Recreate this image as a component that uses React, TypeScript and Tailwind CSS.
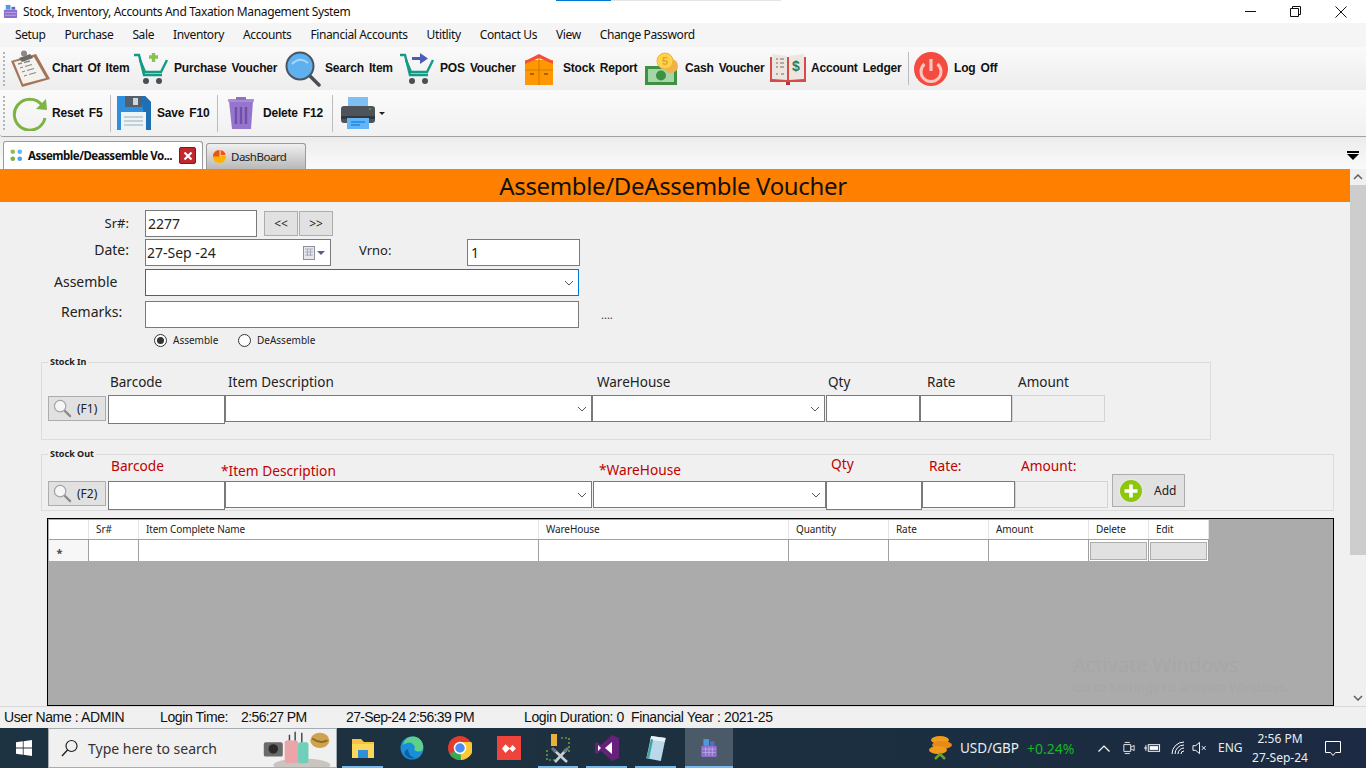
import type { ReactNode } from "react";

const ui = "font-['Noto_Sans','Open_Sans',sans-serif]";

const ClipboardIcon = () => (
  <svg viewBox="0 0 40 38" className="h-[38px] w-[40px]">
    <path d="M0 11 L25 4 L39 29 L11 37 Z" fill="#a5755a" />
    <path d="M3 12 L23 7 L35 28 L12 34 Z" fill="#f4f2ee" />
    <path d="M7 14l4-1M13 12.500l6-1.500M9 18l3-1M14 16.500l7-2M11 22l3-1M16 20.500l7-2M13 26l3-1M18 24.500l7-2" stroke="#8a8a8a" strokeWidth="1.300" />
    <path d="M8 8 L19 4 L22 8 L11 12 Z" fill="#6e6a66" />
    <circle cx="13" cy="3.500" r="3" fill="#8b8783" />
  </svg>
);

const CartIcon = ({ kind }: { kind: "plus" | "arrow" }) => (
  <svg viewBox="0 0 36 34" className="h-[34px] w-[36px]">
    <path d="M1 3 L6 3 L11 23 L29 23" fill="none" stroke="#159a85" strokeWidth="2.400" />
    <path d="M7 8 L12 20 L28 20 L34 8" fill="none" stroke="#159a85" strokeWidth="2.400" />
    <circle cx="13" cy="29" r="3" fill="#4a4f55" />
    <circle cx="26" cy="29" r="3" fill="#4a4f55" />
    {kind === "plus" ? (
      <path d="M16 5h9M20.500 1v9" stroke="#8cc152" strokeWidth="3.400" />
    ) : (
      <g fill="#4d5cb8">
        <rect x="13" y="5" width="9" height="3" />
        <path d="M21 1 L29 6.500 L21 12 Z" />
      </g>
    )}
  </svg>
);

const SearchIcon = () => (
  <svg viewBox="0 0 36 36" className="h-[36px] w-[36px]">
    <path d="M24 24 L34 34" stroke="#4a4f55" strokeWidth="3.500" strokeLinecap="round" />
    <circle cx="15" cy="15" r="13.500" fill="#5eb0ee" stroke="#4a5560" strokeWidth="2" />
    <path d="M7 13 Q15 5 23 12" fill="none" stroke="#a9d8f8" strokeWidth="2" />
  </svg>
);

const BoxIcon = () => (
  <svg viewBox="0 0 30 32" className="h-[32px] w-[30px]">
    <rect x="1" y="7" width="28" height="25" fill="#ff9800" />
    <path d="M1 8 L15 1 L29 8 L29 11 L15 5 L1 11 Z" fill="#f0503c" />
    <path d="M15 5v27M1 17h28" stroke="#d57c00" strokeWidth="1.200" />
    <path d="M6 21h4M20 21h4" stroke="#8a5200" strokeWidth="1.500" />
  </svg>
);

const CashIcon = () => (
  <svg viewBox="0 0 36 34" className="h-[34px] w-[36px]">
    <rect x="1" y="14" width="32" height="19" fill="#3f9142" />
    <rect x="4" y="17" width="26" height="13" fill="#a5d6a7" />
    <circle cx="17" cy="23.500" r="5" fill="#3f9142" />
    <circle cx="27" cy="14" r="7" fill="#f0b04a" />
    <circle cx="21" cy="9" r="8" fill="#fdd34e" stroke="#f2b136" strokeWidth="1" />
    <text x="21" y="13" textAnchor="middle" fontSize="11" fontFamily="Liberation Sans" fontWeight="700" fill="#e8a22d">5</text>
  </svg>
);

const LedgerIcon = () => (
  <svg viewBox="0 0 38 34" className="h-[34px] w-[38px]">
    <path d="M1 5 L1 30 L37 30 L37 5" fill="#d84a4a" />
    <path d="M3 2 L18 4 L18 28 L3 27 Z" fill="#ece5e0" />
    <path d="M35 2 L20 4 L20 28 L35 27 Z" fill="#ece5e0" />
    <path d="M7 7h2M11 7h4M7 11h2M11 11h4M7 15h2M11 15h4M7 22h2M12 22h3" stroke="#a0928c" strokeWidth="1.500" />
    <text x="27" y="19" textAnchor="middle" fontSize="14" fontFamily="Liberation Sans" fontWeight="700" fill="#2e7d4a">$</text>
    <rect x="17" y="30" width="4" height="3" fill="#b33" />
  </svg>
);

const PowerIcon = () => (
  <svg viewBox="0 0 34 34" className="h-[34px] w-[34px]">
    <circle cx="17" cy="17" r="17" fill="#f44b3f" />
    <path d="M10.500 12 A10 10 0 1 0 23.500 12" fill="none" stroke="#ffc4c0" strokeWidth="3" />
    <path d="M17 7v12" stroke="#ffc4c0" strokeWidth="3.200" />
  </svg>
);

const ResetIcon = () => (
  <svg viewBox="0 0 36 36" className="h-[36px] w-[36px]">
    <path d="M30 10 A15.500 15.500 0 1 0 33 23" fill="none" stroke="#7cb342" strokeWidth="3" />
    <path d="M24 14 L35 15 L34 4 Z" fill="#7cb342" />
  </svg>
);

const SaveIcon = () => (
  <svg viewBox="0 0 36 36" className="h-[36px] w-[36px]">
    <path d="M1 1 H29 L35 7 V35 H1 Z" fill="#2f8fdc" />
    <path d="M25 1 H29 L35 7 V35 H30 Z" fill="#1f6fb5" />
    <rect x="9" y="1" width="17" height="11" fill="#54616c" />
    <rect x="17" y="3" width="5" height="7" fill="#cfd8dc" />
    <rect x="5" y="17" width="25" height="18" fill="#eef3f6" />
    <path d="M8 22h19M8 26h19M8 30h19" stroke="#b7c5cd" strokeWidth="1.300" />
  </svg>
);

const TrashIcon = () => (
  <svg viewBox="0 0 28 34" className="h-[34px] w-[28px]">
    <path d="M2 5 H26 L24 33 H5 Z" fill="#9575cd" />
    <rect x="1" y="3" width="26" height="3" rx="1" fill="#a98bd8" />
    <rect x="9" y="1" width="10" height="3" fill="#8e6fc4" />
    <path d="M9 11v17M14 11v17M19 11v17" stroke="#6f4fa8" strokeWidth="2.400" />
  </svg>
);

const PrinterIcon = () => (
  <svg viewBox="0 0 36 34" className="h-[34px] w-[36px]">
    <rect x="8" y="1" width="20" height="11" fill="#7fc0f4" />
    <rect x="1" y="10" width="34" height="17" rx="3" fill="#4d5358" />
    <rect x="1" y="20" width="34" height="3" fill="#33383c" />
    <circle cx="30" cy="13" r="1" fill="#4caf50" />
    <rect x="7" y="22" width="22" height="11" fill="#64b5f6" />
    <path d="M11 26h14M11 29h9" stroke="#1e88e5" strokeWidth="1.300" />
  </svg>
);

const ToolButton = ({ icon, label, iconClass, textClass }: { icon: ReactNode; label: string; iconClass: string; textClass: string }) => (
  <div className="flex items-center">
    <div className={`flex items-center ${iconClass}`}>{icon}</div>
    <span className={`-mt-[1px] whitespace-nowrap text-[12px] font-bold tracking-[-0.2px] text-[#111] [word-spacing:2px] font-['Liberation_Sans',sans-serif] ${textClass}`}>{label}</span>
  </div>
);

const Grip = () => <div className="h-[34px] w-[3px] shrink-0 border-l-2 border-dotted border-[#b5b5b5]" />;

const MagnifierSmall = () => (
  <svg viewBox="0 0 20 20" className="h-[19px] w-[19px]">
    <path d="M11 11 L18 18" stroke="#8a8a8a" strokeWidth="2.400" strokeLinecap="round" />
    <circle cx="7.500" cy="7.500" r="6" fill="#f4f6f8" stroke="#a4a4a4" strokeWidth="1.300" />
  </svg>
);

const Chevron = () => (
  <svg viewBox="0 0 10 6" className="h-[6px] w-[10px]">
    <path d="M1 1 L5 5 L9 1" fill="none" stroke="#555" strokeWidth="1" />
  </svg>
);

const Box = ({ className, children }: { className: string; children?: ReactNode }) => (
  <div className={`flex shrink-0 items-center border border-[#7a7a7a] bg-white ${className}`}>{children}</div>
);

const Combo = ({ className }: { className: string }) => (
  <Box className={`justify-end pr-[4px] ${className}`}>
    <Chevron />
  </Box>
);

const SearchKey = ({ label }: { label: string }) => (
  <div className="flex h-[25px] w-[58px] shrink-0 items-center gap-[5px] border border-[#adadad] bg-[#e1e1e1] pl-[4px] text-[12px] text-[#222]">
    <MagnifierSmall />
    {label}
  </div>
);

const Th = ({ w, children }: { w: string; children?: ReactNode }) => (
  <div className={`flex h-full shrink-0 items-center border-r border-[#e4e4e4] pl-[7px] text-[10px] tracking-[-0.1px] text-[#222] ${w}`}>{children}</div>
);

const Td = ({ w, children }: { w: string; children?: ReactNode }) => (
  <div className={`flex h-full shrink-0 items-center justify-center border-r border-[#a0a0a0] ${w}`}>{children}</div>
);

const GridBtn = () => <div className="h-[18px] w-[57px] border border-[#adadad] bg-[#e1e1e1]" />;

const menus = ["Setup", "Purchase", "Sale", "Inventory", "Accounts", "Financial Accounts", "Utitlity", "Contact Us", "View", "Change Password"];

export default function App() {
  return (
    <div className={`relative flex h-[768px] w-[1366px] flex-col overflow-hidden bg-[#f0f0f0] ${ui}`}>
      {/* loading strip over the title bar */}
      <div className="absolute left-[556px] top-0 flex h-[1px]">
        <div className="w-[55px] bg-[#0078d7]" />
        <div className="w-[170px] bg-[#e4e4e4]" />
      </div>

      {/* title bar */}
      <div className="flex h-[23px] shrink-0 items-center bg-white">
        <svg viewBox="0 0 16 16" className="ml-[3px] h-[15px] w-[15px]">
          <rect x="1" y="6" width="14" height="9" rx="1" fill="#8d6fcb" />
          <rect x="3" y="1" width="5" height="5" fill="#4f9bd9" />
          <rect x="9" y="3" width="4" height="3" fill="#5c6bc0" />
          <path d="M2 9h12M2 12h12" stroke="#b9a6e4" strokeWidth="1" />
        </svg>
        <span className="ml-[5px] text-[12px] tracking-[-0.35px] text-[#111]">Stock, Inventory, Accounts And Taxation Management System</span>
        <div className="ml-auto mr-[19px] flex items-center gap-[34px]">
          <svg viewBox="0 0 11 11" className="h-[11px] w-[11px]"><path d="M0 5.500h11" stroke="#111" /></svg>
          <svg viewBox="0 0 11 11" className="h-[11px] w-[11px]"><path d="M.5 2.500h8v8h-8zM2.500 2.500v-2h8v8h-2" fill="none" stroke="#111" /></svg>
          <svg viewBox="0 0 12 12" className="h-[12px] w-[12px]"><path d="M.5.500l11 11M11.500.500l-11 11" stroke="#111" /></svg>
        </div>
      </div>

      {/* menu */}
      <div className="flex h-[24px] shrink-0 items-center gap-[19px] bg-[#f5f5f5] pl-[15px] text-[12px] tracking-[-0.38px] text-[#111]">
        {menus.map((m) => (
          <span key={m}>{m}</span>
        ))}
      </div>

      {/* toolbar 1 */}
      <div className="flex h-[43px] shrink-0 items-center bg-gradient-to-b from-[#fafafa] to-[#ededed] pl-[3px]">
        <Grip />
        <div className="w-[5px]" />
        <ToolButton icon={<ClipboardIcon />} label="Chart Of Item" iconClass="w-[41px]" textClass="w-[81px]" />
        <ToolButton icon={<CartIcon kind="plus" />} label="Purchase Voucher" iconClass="w-[41px]" textClass="w-[111px]" />
        <ToolButton icon={<SearchIcon />} label="Search Item" iconClass="w-[40px]" textClass="w-[74px]" />
        <ToolButton icon={<CartIcon kind="arrow" />} label="POS Voucher" iconClass="w-[41px]" textClass="w-[84px]" />
        <ToolButton icon={<BoxIcon />} label="Stock Report" iconClass="w-[39px]" textClass="w-[81px]" />
        <ToolButton icon={<CashIcon />} label="Cash Voucher" iconClass="w-[41px]" textClass="w-[84px]" />
        <ToolButton icon={<LedgerIcon />} label="Account Ledger" iconClass="w-[42px]" textClass="w-[97px]" />
        <div className="mr-[5px] h-[33px] w-px bg-[#bcbcbc]" />
        <ToolButton icon={<PowerIcon />} label="Log Off" iconClass="w-[40px]" textClass="" />
      </div>

      {/* toolbar 2 */}
      <div className="flex h-[47px] shrink-0 items-center rounded-bl-[3px] border-b border-[#a0a0a0] bg-gradient-to-b from-[#fbfbfb] to-[#f1f1f1] pl-[3px]">
        <Grip />
        <div className="w-[6px]" />
        <ToolButton icon={<ResetIcon />} label="Reset F5" iconClass="w-[40px]" textClass="w-[58px]" />
        <div className="mr-[5px] h-[37px] w-px bg-[#bcbcbc]" />
        <ToolButton icon={<SaveIcon />} label="Save F10" iconClass="w-[41px]" textClass="w-[60px]" />
        <div className="mr-[9px] h-[37px] w-px bg-[#bcbcbc]" />
        <ToolButton icon={<TrashIcon />} label="Delete F12" iconClass="w-[36px]" textClass="w-[69px]" />
        <div className="mr-[7px] h-[37px] w-px bg-[#bcbcbc]" />
        <PrinterIcon />
        <div className="ml-[3px] h-0 w-0 border-x-[3px] border-t-[3px] border-x-transparent border-t-[#222]" />
      </div>

      {/* tabs */}
      <div className="flex h-[32px] shrink-0 items-end bg-gradient-to-b from-[#ececec] to-[#fafafa] pl-[3px]">
        <div className="flex h-[28px] w-[200px] items-center rounded-t-[3px] border border-b-0 border-[#9a9a9a] bg-white pl-[6px]">
          <svg viewBox="0 0 14 14" className="h-[13px] w-[13px]">
            <circle cx="3" cy="3" r="2.500" fill="#8bc34a" />
            <circle cx="10.500" cy="3" r="2.500" fill="#64b5f6" />
            <circle cx="3" cy="10.500" r="2.500" fill="#7cb342" />
            <circle cx="10.500" cy="10.500" r="2.500" fill="#42a5f5" />
          </svg>
          <span className="ml-[5px] w-[151px] whitespace-nowrap text-[11.500px] font-bold tracking-[-0.5px] text-[#111]">Assemble/Deassemble Vo...</span>
          <div className="flex h-[17px] w-[17px] items-center justify-center rounded-[2px] border border-[#7d1a1a] bg-[#c1272d]">
            <svg viewBox="0 0 10 10" className="h-[10px] w-[10px]"><path d="M1.500 1.500l7 7M8.500 1.500l-7 7" stroke="#fff" strokeWidth="2.200" /></svg>
          </div>
        </div>
        <div className="ml-[3px] flex h-[26px] w-[100px] items-center rounded-t-[3px] border border-b-0 border-[#9a9a9a] bg-gradient-to-b from-[#f0f0f0] to-[#b9b9b9] pl-[5px] text-[11.500px] tracking-[-0.5px] text-[#222]">
          <svg viewBox="0 0 16 16" className="h-[15px] w-[15px]">
            <circle cx="8" cy="8" r="7" fill="#ffb300" />
            <path d="M8 8 L8 1 A7 7 0 0 0 1 8 Z" fill="#e8541e" />
            <path d="M8.800 7 L8.800 .800 A7 7 0 0 1 15 7 Z" fill="#f4511e" stroke="#fff" strokeWidth=".6" />
          </svg>
          <span className="ml-[4px]">DashBoard</span>
        </div>
        <div className="mb-[9px] ml-auto mr-[7px] flex flex-col items-center gap-[1px]">
          <div className="h-[2px] w-[12px] bg-black" />
          <div className="h-0 w-0 border-x-[6px] border-t-[6px] border-x-transparent border-t-black" />
        </div>
      </div>

      {/* main area */}
      <div className="relative flex min-h-0 flex-1">
        <div className="flex w-[1350px] shrink-0 flex-col overflow-hidden">
          <div className="flex h-[33px] shrink-0 items-center justify-center bg-[#ff8000] pr-[4px] pt-[1px] text-[24px] tracking-[-0.35px] text-[#111]">Assemble/DeAssemble Voucher</div>

          <div className="flex flex-col pl-[145px] pt-[8px] text-[#222]">
            <div className="flex items-start">
              <span className="-ml-[46px] mt-[4px] w-[46px] pr-[16px] text-right text-[13px]">Sr#:</span>
              <Box className="h-[27px] w-[112px] pl-[2px] text-[14px]">2277</Box>
              <div className="ml-[7px] mt-[1px] flex gap-[1px]">
                <div className="flex h-[25px] w-[34px] items-center justify-center border border-[#adadad] bg-[#e1e1e1] text-[12px]">&lt;&lt;</div>
                <div className="flex h-[25px] w-[34px] items-center justify-center border border-[#adadad] bg-[#e1e1e1] text-[12px]">&gt;&gt;</div>
              </div>
            </div>
            <div className="mt-[2px] flex items-start">
              <span className="-ml-[56px] w-[56px] pr-[16px] text-right text-[14px]">Date:</span>
              <Box className="h-[27px] w-[186px] pl-[1px] text-[14px]">
                <span>27-Sep -24</span>
                <svg viewBox="0 0 24 14" className="ml-auto mr-[3px] h-[14px] w-[24px]">
                  <rect x=".5" y=".5" width="11" height="13" fill="#e6e8ee" stroke="#8b8f99" />
                  <path d="M2 3h8M2 6h8M2 9h8M4.500 3v7M7.500 3v7" stroke="#9aa0ad" strokeWidth=".8" />
                  <path d="M14 5h8l-4 4z" fill="#55617d" />
                </svg>
              </Box>
              <span className="ml-[28px] mt-[2px] w-[108px] text-[13px]">Vrno:</span>
              <Box className="h-[27px] w-[113px] pl-[3px] text-[14px]">1</Box>
            </div>
            <div className="mt-[3px] flex items-start">
              <span className="-ml-[91px] mt-[2px] w-[91px] text-[14px]">Assemble</span>
              <Box className="h-[27px] w-[434px] justify-end border-[#0078d7] pr-[4px]">
                <Chevron />
              </Box>
            </div>
            <div className="mt-[5px] flex items-start">
              <span className="-ml-[84px] w-[84px] text-[14px]">Remarks:</span>
              <Box className="h-[27px] w-[434px]" />
              <span className="ml-[22px] mt-[7px] text-[11px] leading-[14px] text-[#333]">....</span>
            </div>
            <div className="ml-[9px] mt-[5px] flex h-[14px] items-center text-[10px]">
              <div className="flex h-[13px] w-[13px] items-center justify-center rounded-full border border-[#333] bg-white">
                <div className="h-[7px] w-[7px] rounded-full bg-[#333]" />
              </div>
              <span className="ml-[6px] w-[65px]">Assemble</span>
              <div className="h-[13px] w-[13px] rounded-full border border-[#333] bg-white" />
              <span className="ml-[6px]">DeAssemble</span>
            </div>
          </div>

          {/* stock in */}
          <div className="relative ml-[41px] mt-[15px] h-[78px] w-[1170px] shrink-0 border border-[#dcdcdc] pl-[6px]">
            <span className="absolute -top-[7px] left-[6px] bg-[#f0f0f0] px-[2px] text-[9px] font-bold leading-[12px] text-[#222]">Stock In</span>
            <div className="flex h-[32px] items-end pb-[4px] text-[13.500px] leading-[18px] text-[#222]">
              <span className="ml-[62px] w-[118px]">Barcode</span>
              <span className="w-[369px]">Item Description</span>
              <span className="w-[231px]">WareHouse</span>
              <span className="w-[99px]">Qty</span>
              <span className="w-[91px]">Rate</span>
              <span>Amount</span>
            </div>
            <div className="flex items-start">
              <div className="mr-[2px] mt-[1px]"><SearchKey label="(F1)" /></div>
              <Box className="h-[29px] w-[117px]" />
              <Combo className="h-[27px] w-[367px]" />
              <Combo className="h-[27px] w-[233px]" />
              <Box className="ml-[1px] h-[27px] w-[94px]" />
              <Box className="h-[27px] w-[92px]" />
              <div className="h-[27px] w-[93px] border border-[#d4d4d4] bg-[#f0f0f0]" />
            </div>
          </div>

          {/* stock out */}
          <div className="relative ml-[41px] mt-[14px] h-[57px] w-[1293px] shrink-0 border border-[#dcdcdc] pl-[6px]">
            <span className="absolute -top-[7px] left-[6px] bg-[#f0f0f0] px-[2px] text-[9px] font-bold leading-[12px] text-[#222]">Stock Out</span>
            <div className="flex h-[26px] text-[13.700px] leading-[18px] text-[#c00000]">
              <span className="ml-[63px] mt-[2px] w-[110px]">Barcode</span>
              <span className="mt-[7px] w-[378px]">*Item Description</span>
              <span className="mt-[6px] w-[232px]">*WareHouse</span>
              <span className="mt-px h-[18px] w-[98px] -translate-y-[1px]">Qty</span>
              <span className="mt-[2px] w-[92px]">Rate:</span>
              <span className="mt-[2px]">Amount:</span>
            </div>
            <div className="flex items-start">
              <div className="mr-[2px]"><SearchKey label="(F2)" /></div>
              <Box className="h-[29px] w-[117px]" />
              <Combo className="h-[27px] w-[367px]" />
              <Combo className="ml-[1px] h-[27px] w-[233px]" />
              <Box className="h-[29px] w-[96px]" />
              <Box className="h-[27px] w-[93px]" />
              <div className="h-[27px] w-[93px] border border-[#d4d4d4] bg-[#f0f0f0]" />
              <div className="-mt-[7px] ml-[4px] flex h-[33px] w-[73px] items-center border border-[#adadad] bg-[#e1e1e1] pl-[5px] text-[12px] text-[#222]">
                <svg viewBox="0 0 26 26" className="h-[26px] w-[26px]">
                  <circle cx="13" cy="13" r="12.500" fill="#e6e6e6" />
                  <circle cx="13" cy="13" r="11" fill="#8dc70a" />
                  <path d="M13 6.500v13M6.500 13h13" stroke="#fff" strokeWidth="3.600" />
                </svg>
                <span className="ml-[10px]">Add</span>
              </div>
            </div>
          </div>

          {/* grid */}
          <div className="ml-[47px] mt-[7px] flex w-[1287px] min-h-0 flex-1 flex-col border border-black bg-[#ababab] pl-px pt-px">
            <div className="flex h-[19px] w-[1160px] shrink-0 items-stretch bg-white">
              <Th w="w-[40px]" />
              <Th w="w-[50px]">Sr#</Th>
              <Th w="w-[400px]">Item Complete Name</Th>
              <Th w="w-[250px]">WareHouse</Th>
              <Th w="w-[100px]">Quantity</Th>
              <Th w="w-[100px]">Rate</Th>
              <Th w="w-[100px]">Amount</Th>
              <Th w="w-[60px]">Delete</Th>
              <Th w="w-[60px]">Edit</Th>
            </div>
            <div className="flex h-[22px] w-[1160px] shrink-0 border-t border-[#a0a0a0] bg-white">
              <Td w="w-[40px] bg-[#f7f7f7] pr-[18px]"><span className="mt-[4px] text-[11px] font-bold leading-none text-[#444]">*</span></Td>
              <Td w="w-[50px]" />
              <Td w="w-[400px]" />
              <Td w="w-[250px]" />
              <Td w="w-[100px]" />
              <Td w="w-[100px]" />
              <Td w="w-[100px]" />
              <Td w="w-[60px]"><GridBtn /></Td>
              <Td w="w-[60px]"><GridBtn /></Td>
            </div>
          </div>
        </div>

        {/* scrollbar */}
        <div className="flex w-[16px] shrink-0 flex-col items-center bg-[#f0f0f0]">
          <svg viewBox="0 0 10 6" className="my-[5px] h-[6px] w-[10px]"><path d="M1 5 L5 1 L9 5" fill="none" stroke="#606060" strokeWidth="1.500" /></svg>
          <div className="h-[370px] w-full bg-[#cdcdcd]" />
          <svg viewBox="0 0 10 6" className="mb-[5px] mt-auto h-[6px] w-[10px]"><path d="M1 1 L5 5 L9 1" fill="none" stroke="#606060" strokeWidth="1.500" /></svg>
        </div>

        {/* activation watermark */}
        <div className="absolute left-[1073px] top-[483px] text-[#a7a7a7]">
          <div className="text-[20px] leading-[26px]">Activate Windows</div>
          <div className="text-[13px] leading-[18px]">Go to Settings to activate Windows.</div>
        </div>
      </div>

      {/* status bar */}
      <div className="flex h-[22px] shrink-0 items-center border-t border-[#d8d8d8] bg-[#f0f0f0] pl-[4px] text-[14px] tracking-[-0.39px] text-[#111] font-['Liberation_Sans',sans-serif]">
        <span className="w-[156px]">User Name : ADMIN</span>
        <span className="w-[81px]">Login Time:</span>
        <span className="w-[105px] tracking-[-0.6px]">2:56:27 PM</span>
        <span className="w-[178px] tracking-[-0.64px]">27-Sep-24 2:56:39 PM</span>
        <span className="w-[107px]">Login Duration: 0</span>
        <span>Financial Year : 2021-25</span>
      </div>

      {/* taskbar */}
      <div className="flex h-[40px] shrink-0 items-stretch bg-gradient-to-r from-[#1e3341] via-[#1c3040] to-[#1b2a42] text-white">
        <div className="flex w-[48px] items-center justify-center">
          <svg viewBox="0 0 16 16" className="h-[16px] w-[16px]" fill="#fff">
            <path d="M0 2.300 L6.800 1.300 V7.600 H0 Z M7.600 1.200 L16 0 V7.600 H7.600 Z M0 8.400 H6.800 V14.700 L0 13.700 Z M7.600 8.400 H16 V16 L7.600 14.800 Z" />
          </svg>
        </div>
        <div className="relative flex w-[289px] items-center border border-[#a8adb2] bg-[#f0f0f0] pl-[12px] text-[14px] text-[#333]">
          <svg viewBox="0 0 18 18" className="h-[18px] w-[18px]">
            <circle cx="10.500" cy="7" r="5.500" fill="none" stroke="#222" strokeWidth="1.200" />
            <path d="M6.500 11 L1 17" stroke="#222" strokeWidth="1.400" />
          </svg>
          <span className="ml-[9px]">Type here to search</span>
          <svg viewBox="0 0 76 40" className="absolute bottom-0 right-0 h-[38px] w-[76px]">
            <ellipse cx="42" cy="38" rx="30" ry="7" fill="#c9c6c2" />
            <rect x="2" y="14" width="20" height="15" rx="2" fill="#6a6a6a" />
            <circle cx="12" cy="21" r="5" fill="#2a2a2a" />
            <rect x="24" y="12" width="14" height="24" rx="2" fill="#eda4a8" />
            <rect x="38" y="14" width="11" height="22" rx="2" fill="#6fcfb8" />
            <path d="M29 12V6M35 12V3M42 14V4" stroke="#444" strokeWidth="1.500" />
            <ellipse cx="61" cy="12" rx="10" ry="8" fill="#d0a24c" />
            <path d="M53 10q8 6 16 2" fill="none" stroke="#8a6a2f" strokeWidth="2" />
          </svg>
        </div>
        <div className="flex">
          {/* explorer */}
          <TaskIcon w="w-[49px] ml-[1px]" on>
            <svg viewBox="0 0 24 24" className="h-[24px] w-[24px]">
              <path d="M1 3h9l3 3h10v16H1z" fill="#f5c242" />
              <path d="M1 8h22v14H1z" fill="#fbd75b" />
              <rect x="7" y="14" width="10" height="8" fill="#2f8fd8" />
            </svg>
          </TaskIcon>
          <TaskIcon w="w-[49px]">
            <svg viewBox="0 0 24 24" className="h-[24px] w-[24px]">
              <circle cx="12" cy="12" r="11.500" fill="#1a8fd6" />
              <path d="M3 9 A9.500 9.500 0 0 1 23 12 Q23 16 18 15.500 Q13 15 15 11 Q12 5 7 7 Q4 8 3 9Z" fill="#5fd08a" />
              <path d="M8 13 Q8 20 15 22 Q10 24 5 19 Q3 15 8 13Z" fill="#0c5fa8" />
            </svg>
          </TaskIcon>
          <TaskIcon w="w-[48px]">
            <svg viewBox="0 0 24 24" className="h-[24px] w-[24px]">
              <circle cx="12" cy="12" r="12" fill="#e33b2e" />
              <path d="M12 12 L1.600 18 A12 12 0 0 0 16 23.300 Z" fill="#3aa757" />
              <path d="M12 6 H23.300 A12 12 0 0 1 13 24 Z" fill="#fcc934" />
              <circle cx="12" cy="12" r="5.500" fill="#4a8cf0" stroke="#fff" strokeWidth="1.500" />
            </svg>
          </TaskIcon>
          <TaskIcon w="w-[50px]">
            <div className="flex h-[24px] w-[24px] items-center justify-center bg-[#ef443b]">
              <svg viewBox="0 0 16 10" className="h-[9px] w-[14px]" fill="#fff"><path d="M4 0 L9 5 L4 10 L0 5Z M12 1 L16 5 L12 9 L8.500 5Z" /></svg>
            </div>
          </TaskIcon>
          <TaskIcon w="w-[48px]" on>
            <svg viewBox="0 0 26 30" className="h-[30px] w-[26px]">
              <rect x="6" y="1" width="6" height="12" fill="#e8b23a" />
              <path d="M16 5h8v14M2 17v10h8" fill="none" stroke="#8bbf3f" strokeWidth="1.200" strokeDasharray="2 2" />
              <path d="M9 17 L22 29M21 17 L10 29" stroke="#c9ced4" strokeWidth="2.600" />
              <path d="M7 15l4 4M23 15l-4 4" stroke="#6e7780" strokeWidth="3" />
            </svg>
          </TaskIcon>
          <TaskIcon w="w-[49px]" on>
            <svg viewBox="0 0 24 28" className="h-[28px] w-[24px]">
              <path d="M17 1 L24 4 V24 L17 27 L6 17 L2 20 L0 19 V9 L2 8 L6 11Z" fill="#68217a" />
              <path d="M17 8 V20 L10 14Z M3 11 V17 L6 14Z" fill="#fff" />
            </svg>
          </TaskIcon>
          <TaskIcon w="w-[49px]" on>
            <svg viewBox="0 0 22 28" className="h-[27px] w-[22px]">
              <path d="M6 1 L21 3 L16 27 L1 24Z" fill="#b9d9ea" />
              <path d="M6 1 L21 3 L20 7 L5 5Z" fill="#e9f3f8" />
              <path d="M1 24 L6 4 L8 5 L4 24Z" fill="#3fa5a0" />
            </svg>
          </TaskIcon>
          <div className="relative ml-[5px] flex w-[48px] items-center justify-center bg-[#4a5a68]">
            <svg viewBox="0 0 16 18" className="h-[20px] w-[18px]">
              <rect x="1" y="7" width="14" height="10" rx="1" fill="#8d6fcb" />
              <rect x="3" y="1" width="5" height="6" fill="#4f9bd9" />
              <rect x="9" y="3" width="4" height="4" fill="#5c6bc0" />
              <path d="M2 10h12M2 13h12M5 8v8M8 8v8M11 8v8" stroke="#b9a6e4" strokeWidth=".8" />
            </svg>
            <div className="absolute bottom-0 left-0 h-[2px] w-full bg-[#76b9ed]" />
          </div>
        </div>

        <div className="ml-auto flex items-center">
          <svg viewBox="0 0 24 26" className="h-[26px] w-[24px]">
            <ellipse cx="12" cy="5" rx="9" ry="4" fill="#f09a1e" />
            <ellipse cx="14" cy="10" rx="10" ry="4" fill="#e88a16" />
            <ellipse cx="10" cy="15" rx="9" ry="4" fill="#f09a1e" />
            <path d="M7 24 L12 19 L17 24" fill="none" stroke="#6aa51f" strokeWidth="2.500" />
          </svg>
          <span className="ml-[8px] w-[58px] whitespace-nowrap text-[13.500px] text-[#e8edf2]">USD/GBP</span>
          <span className="ml-[9px] w-[71px] text-[14px] text-[#16b525]">+0.24%</span>
          <svg viewBox="0 0 12 7" className="h-[7px] w-[12px]"><path d="M.5 6.500 L6 1 L11.500 6.500" fill="none" stroke="#fff" strokeWidth="1.200" /></svg>
          <svg viewBox="0 0 14 16" className="ml-[13px] h-[16px] w-[12px]" fill="none" stroke="#fff"><path d="M1 4h8v8H1zM9 7l4-2v6l-4-2M2 1.500h6M2 14.500h6" /></svg>
          <svg viewBox="0 0 18 12" className="ml-[9px] h-[12px] w-[17px]"><rect x="4.500" y="2.500" width="12" height="7" fill="none" stroke="#fff" /><rect x="6" y="4" width="9" height="4" fill="#fff" /><path d="M0 6h3M2 3v6" stroke="#fff" /></svg>
          <svg viewBox="0 0 16 14" className="ml-[10px] h-[14px] w-[16px]" fill="none" stroke="#fff" strokeWidth="1"><path d="M1 13A12 12 0 0 1 13 1M4 13A9 9 0 0 1 13 4M7 13A6 6 0 0 1 13 7M10 13A3 3 0 0 1 13 10" /></svg>
          <svg viewBox="0 0 16 14" className="ml-[5px] h-[14px] w-[15px]" fill="none" stroke="#fff"><path d="M1 4.500h3L8 1v12L4 9.500H1zM10.500 5l4 4M14.500 5l-4 4" /></svg>
          <span className="ml-[11px] w-[24px] whitespace-nowrap text-[12px] text-[#e8edf2]">ENG</span>
          <div className="ml-[10px] flex w-[56px] flex-col items-center text-[12px] leading-[19px] text-[#e8edf2]">
            <span>2:56 PM</span>
            <span className="whitespace-nowrap">27-Sep-24</span>
          </div>
          <svg viewBox="0 0 16 15" className="ml-[17px] mr-[25px] h-[15px] w-[16px]" fill="none" stroke="#fff"><path d="M.5.500h15v11h-5l-2.500 3-2.500-3h-5z" /></svg>
        </div>
      </div>
    </div>
  );
}

function TaskIcon({ w, on, children }: { w: string; on?: boolean; children: ReactNode }) {
  return (
    <div className={`relative flex items-center justify-center ${w}`}>
      {children}
      {on && <div className="absolute bottom-0 left-[4px] right-[4px] h-[2px] bg-[#76b9ed]" />}
    </div>
  );
}
